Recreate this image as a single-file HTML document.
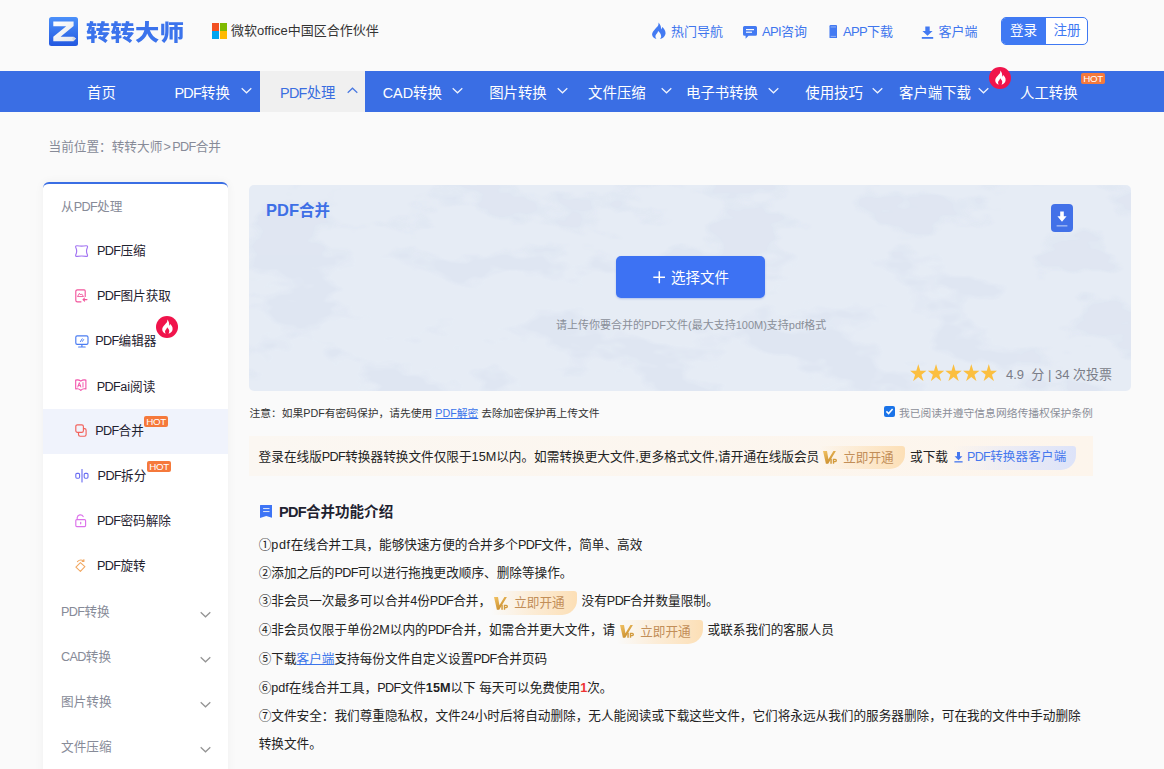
<!DOCTYPE html>
<html lang="zh-CN">
<head>
<meta charset="utf-8">
<title>PDF合并 - 转转大师</title>
<style>
*{box-sizing:border-box;margin:0;padding:0}
html,body{width:1164px;height:769px;overflow:hidden}
body{background:#fafafa;font-family:"Liberation Sans","Noto Sans CJK SC",sans-serif;color:#333;position:relative;font-size:13px}
.abs{position:absolute;white-space:nowrap}
.l{letter-spacing:-.05em}
.l2{letter-spacing:-.02em}
.gt{padding:0 1.3px}
#logo-ico{left:49px;top:17px;width:29px;height:29px}
#logo-txt{left:86px;top:14.8px;font-size:24.3px;letter-spacing:.25px;font-weight:900;color:#3b73ec;line-height:36px;transform:scaleY(.87);transform-origin:0 50%}
#ms{left:212px;top:23px;width:15px;height:16px}
#ms i{position:absolute;width:7.3px;height:7.8px}
#ms-txt{left:231px;top:21px;font-size:13px;line-height:20px;color:#333}
.tl{font-size:13px;line-height:20px;color:#3f76ee;top:21.7px}
#btn{left:1001px;top:17px;width:87px;height:28px;border:1px solid #3f79f3;border-radius:5px;background:#fff;overflow:hidden}
#btn .a{position:absolute;left:-1px;top:-1px;width:45px;height:28px;background:#3f79f3;color:#fff;font-size:13.6px;line-height:28.6px;text-align:center}
#btn .b{position:absolute;left:44px;top:-1px;width:42px;height:28px;color:#3f79f3;font-size:13.6px;line-height:28.6px;text-align:center}
#nav{left:0;top:71px;width:1164px;height:41px;background:#3a6ee4}
#nav .it{position:absolute;top:1.8px;height:41px;line-height:41px;font-size:14.4px;color:#fff;white-space:nowrap}
#nav .act{position:absolute;left:260px;top:0;width:105px;height:41px;background:#f0f0f0}
#nav svg.cv{position:absolute;top:15.7px;margin-left:-.7px;width:11px;height:7px}
.hot{position:absolute;background:#f5793b;color:#fff;font-size:9.8px;line-height:11.6px;height:11.2px;width:24px;text-align:center;border-radius:2px;font-weight:400;letter-spacing:-.35px}
.fire{position:absolute;width:22.4px;height:22.4px;border-radius:50%;background:#f0144b}
#bc{left:48.5px;top:137px;font-size:12.65px;line-height:20px;color:#878b98}
#side{left:43px;top:182.3px;width:185px;height:600px;background:#fff;border-top:2px solid #3a6ee4;border-radius:6px 6px 0 0;box-shadow:0 0 10px rgba(0,0,0,.05)}
#side .h{position:absolute;left:18px;font-size:12.65px;line-height:20px;color:#878b98;white-space:nowrap}
#side .r{position:absolute;font-size:12.65px;line-height:20px;color:#1f2230;white-space:nowrap}
#side .sel{position:absolute;left:0;top:224.7px;width:185px;height:44.8px;background:#f0f3fc}
#side svg.ic{position:absolute;width:14px;height:14px;overflow:visible}
#side svg.cv{position:absolute;left:157px;width:11px;height:7px}
#panel{left:249px;top:185px;width:882px;height:206px;background:#e6ecf5;border-radius:5px;overflow:hidden}
#ptitle{left:266px;top:198px;font-size:15.5px;font-weight:700;color:#3e6fe6;line-height:24px}
#ptitle i{font-style:normal;font-size:16.5px}
#dl{left:1051px;top:203.7px;width:22px;height:28.5px;border-radius:4px;background:#4271e8}
#choose{left:616px;top:256px;width:149px;height:42px;background:#3d72f3;border-radius:5px;box-shadow:0 1px 2px rgba(60,100,220,.3)}
#choose-t{left:671px;top:267.5px;font-size:14.5px;line-height:20px;color:#fff}
#tip{left:556px;top:316px;font-size:11px;line-height:18px;color:#8a8f99}
#stars{left:909.6px;top:362.4px;font-size:17.6px;line-height:24px;color:#fbbf40;transform:scaleY(1.07)}
#score{left:1006px;top:364.8px;font-size:13px;line-height:20px;color:#7a7d88}
#note{left:249.5px;top:404.2px;font-size:10.75px;line-height:18px;color:#333}
#note a{color:#3b74ea;text-decoration:underline}
#agree{left:899px;top:404px;font-size:10.78px;line-height:18px;color:#8b8e98}
#cb{left:883.7px;top:406.2px;width:11px;height:10.6px;background:#1a73e8;border-radius:2px}
#bar{left:249px;top:436px;width:844px;height:40px;background:linear-gradient(90deg,#fbf7f2,#fdf5ec)}
.b13{font-size:12.65px;line-height:20px;color:#222}
.vip{position:absolute;height:23.6px;border-radius:0 3px 15px 0;background:linear-gradient(90deg,rgba(253,226,188,0) 0%,rgba(253,226,188,.55) 45%,#fcdfb6 100%);white-space:nowrap}
.vip>span{position:absolute;left:23.6px;top:2px;font-size:12.65px;line-height:20px;color:#c28e58}
.vip>svg{position:absolute;left:3.6px;top:5.4px;width:14.5px;height:13px}
.cli{position:absolute;height:23.6px;border-radius:0 3px 15px 0;background:linear-gradient(90deg,rgba(222,228,250,0) 0%,rgba(222,228,250,.6) 50%,#dde3f9 100%);white-space:nowrap}
.cli>span{position:absolute;left:14.5px;top:1.3px;font-size:12.5px;line-height:20px;color:#4577ee;letter-spacing:.2px}
.cli>svg{position:absolute;left:1.5px;top:6px;width:9px;height:10.5px}
#sec{left:279px;top:500.5px;font-size:14.55px;font-weight:700;line-height:22px;color:#1f2230}
.ln{position:absolute;left:258.7px;font-size:12.63px;line-height:20px;color:#222;white-space:nowrap}
.ln a{color:#3b74ea;text-decoration:underline}
.ln b{font-weight:700}
.ln .red{color:#e33}
</style>
</head>
<body>
<svg id="logo-ico" class="abs" viewBox="0 0 29 29">
  <defs><linearGradient id="lg" x1="0" y1="0" x2="0" y2="1"><stop offset="0" stop-color="#4b90fa"/><stop offset="1" stop-color="#2358e0"/></linearGradient>
  <linearGradient id="lz" x1="0" y1="0" x2="1" y2="1"><stop offset="0" stop-color="#ffffff"/><stop offset="1" stop-color="#e4e6ea"/></linearGradient></defs>
  <rect x="0" y="0" width="29" height="29" rx="2.5" fill="url(#lg)"/>
  <path d="M4.3 4.6H24.6V9L11.6 19.7H24.4L27 21.4L24.4 24.3H4.3V19.7L17.2 9.2H4.3Z" fill="url(#lz)"/>
  <path d="M24.4 19.7L27 21.4L24.4 24.3L23.2 21.6Z" fill="#d3d6dc"/>
</svg>
<div id="logo-txt" class="abs">转转大师</div>
<div id="ms" class="abs"><i style="left:0;top:0;background:#f25022"></i><i style="left:7.7px;top:0;background:#7fba00"></i><i style="left:0;top:8.2px;background:#00a4ef"></i><i style="left:7.7px;top:8.2px;background:#ffb900"></i></div>
<div id="ms-txt" class="abs">微软office中国区合作伙伴</div>
<svg class="abs" style="left:651.3px;top:22.2px;width:15.2px;height:17.4px" viewBox="0 0 15 17"><path d="M7.2 0.3C8.2 3 6 4.6 4.3 6.6C2.4 8.8 0.6 10.6 1.2 13.1C1.7 15.2 3.6 16.6 5.4 16.8C4.2 15.6 4 13.8 5 12.3C5.8 11.1 6.8 10.3 7 8.8C8.6 10.2 10.3 12.2 10 14.4C9.9 15.4 9.4 16.2 8.8 16.8C11.3 16.5 13.6 14.6 14.2 12C15 8.6 12.6 6.4 11.2 4.9C10.9 5.9 10.6 6.6 9.9 7.2C10.1 4.4 9.2 1.7 7.2 0.3Z" fill="#437af2"/></svg>
<div class="abs tl" style="left:671px">热门导航</div>
<svg class="abs" style="left:742.6px;top:25.5px;width:14px;height:13px" viewBox="0 0 14 13"><path d="M1.5 0H12.5A1.5 1.5 0 0 1 14 1.5V8.3A1.5 1.5 0 0 1 12.5 9.8H5.5L2.6 12.8V9.8H1.5A1.5 1.5 0 0 1 0 8.3V1.5A1.5 1.5 0 0 1 1.5 0Z" fill="#437af2"/><rect x="3" y="3" width="8" height="1.2" fill="#fafafa"/><rect x="3" y="5.6" width="6" height="1.2" fill="#fafafa"/></svg>
<div class="abs tl" style="left:762px"><span class="l">API</span>咨询</div>
<svg class="abs" style="left:828.6px;top:24.8px;width:8.6px;height:13.4px" viewBox="0 0 8 14"><rect x="0" y="0" width="8" height="14" rx="1.2" fill="#437af2"/><rect x="1.2" y="1.6" width="5.6" height="0.9" fill="#fafafa" opacity=".5"/><rect x="1.2" y="11.4" width="5.6" height="0.9" fill="#fafafa" opacity=".5"/></svg>
<div class="abs tl" style="left:843px"><span class="l">APP</span>下载</div>
<svg class="abs" style="left:921px;top:25.5px;width:13px;height:13px" viewBox="0 0 13 13"><path d="M4.3 0.5H8.7V5H11.6L6.5 9.8L1.4 5H4.3Z" fill="#437af2"/><rect x="0.8" y="11" width="11.4" height="1.8" fill="#437af2"/></svg>
<div class="abs tl" style="left:938.5px">客户端</div>
<div id="btn" class="abs"><div class="a">登录</div><div class="b">注册</div></div>
<div id="nav" class="abs">
  <div class="act"></div>
  <div class="it" style="left:87px">首页</div>
  <div class="it" style="left:174.4px"><span class="l">PDF</span>转换</div>
  <svg class="cv" style="left:241.5px" viewBox="0 0 11 7"><path d="M.7 1.2L5.5 5.8L10.3 1.2" fill="none" stroke="#fff" stroke-width="1.2" opacity=".92"/></svg>
  <div class="it" style="left:280px;color:#3a6ee0"><span class="l">PDF</span>处理</div>
  <svg class="cv" style="left:347.5px" viewBox="0 0 11 7"><path d="M.7 5.8L5.5 1.2L10.3 5.8" fill="none" stroke="#3a6ee0" stroke-width="1.2" opacity=".92"/></svg>
  <div class="it" style="left:382.7px">CAD转换</div>
  <svg class="cv" style="left:452.5px" viewBox="0 0 11 7"><path d="M.7 1.2L5.5 5.8L10.3 1.2" fill="none" stroke="#fff" stroke-width="1.2" opacity=".92"/></svg>
  <div class="it" style="left:489.2px">图片转换</div>
  <svg class="cv" style="left:557.2px" viewBox="0 0 11 7"><path d="M.7 1.2L5.5 5.8L10.3 1.2" fill="none" stroke="#fff" stroke-width="1.2" opacity=".92"/></svg>
  <div class="it" style="left:588.1px">文件压缩</div>
  <svg class="cv" style="left:662px" viewBox="0 0 11 7"><path d="M.7 1.2L5.5 5.8L10.3 1.2" fill="none" stroke="#fff" stroke-width="1.2" opacity=".92"/></svg>
  <div class="it" style="left:686px">电子书转换</div>
  <svg class="cv" style="left:768.5px" viewBox="0 0 11 7"><path d="M.7 1.2L5.5 5.8L10.3 1.2" fill="none" stroke="#fff" stroke-width="1.2" opacity=".92"/></svg>
  <div class="it" style="left:805.3px">使用技巧</div>
  <svg class="cv" style="left:873px" viewBox="0 0 11 7"><path d="M.7 1.2L5.5 5.8L10.3 1.2" fill="none" stroke="#fff" stroke-width="1.2" opacity=".92"/></svg>
  <div class="it" style="left:899px">客户端下载</div>
  <svg class="cv" style="left:978.5px" viewBox="0 0 11 7"><path d="M.7 1.2L5.5 5.8L10.3 1.2" fill="none" stroke="#fff" stroke-width="1.2" opacity=".92"/></svg>
  <div class="it" style="left:1020px">人工转换</div>
  <div class="hot" style="left:1081px;top:2.1px">HOT</div>
</div>
<div class="fire" style="left:988.8px;top:66.7px"><svg viewBox="0 0 23 23" width="22.4" height="22.4" style="display:block"><path d="M11.5 3.6C12.3 6 10.4 7.4 9 9C7.4 10.8 6 12.4 6.5 14.6C6.9 16.6 8.5 17.9 10.1 18.1C9.2 17 9 15.6 9.8 14.4C10.5 13.4 11.3 12.7 11.4 11.5C12.6 12.6 13.9 14.2 13.6 16C13.5 16.9 13.2 17.5 12.7 18.1C14.8 17.8 16.6 16.2 17 14.1C17.6 11.3 15.7 9.5 14.6 8.3C14.4 9.1 14.1 9.6 13.6 10.1C13.8 7.8 13.1 4.9 11.5 3.6Z" fill="#fff"/></svg></div>
<div id="bc" class="abs">当前位置：转转大师<span class="gt">&gt;</span><span class="l">PDF</span>合并</div>
<div id="side" class="abs">
  <div class="sel"></div>
  <div class="h" style="top:12.5px">从<span class="l">PDF</span>处理</div>
  <div class="r" style="left:54.0px;top:57.0px"><span class="l">PDF</span>压缩</div>
  <div class="r" style="left:54.0px;top:102.1px"><span class="l">PDF</span>图片获取</div>
  <div class="r" style="left:52.2px;top:146.9px"><span class="l">PDF</span>编辑器</div>
  <div class="r" style="left:53.8px;top:192.3px"><span class="l">PDF</span>ai阅读</div>
  <div class="r" style="left:52.2px;top:236.8px"><span class="l">PDF</span>合并</div>
  <div class="r" style="left:54.6px;top:282.1px"><span class="l">PDF</span>拆分</div>
  <div class="r" style="left:54.0px;top:327.1px"><span class="l">PDF</span>密码解除</div>
  <div class="r" style="left:54.0px;top:372.1px"><span class="l">PDF</span>旋转</div>
  <div class="h" style="top:417.7px"><span class="l">PDF</span>转换</div>
  <svg class="cv" style="left:157px;top:427.2px" viewBox="0 0 11 7"><path d="M.7 1.2L5.5 5.8L10.3 1.2" fill="none" stroke="#8a8a8a" stroke-width="1.2" opacity=".92"/></svg>
  <div class="h" style="top:462.7px"><span class="l">CAD</span>转换</div>
  <svg class="cv" style="left:157px;top:472.2px" viewBox="0 0 11 7"><path d="M.7 1.2L5.5 5.8L10.3 1.2" fill="none" stroke="#8a8a8a" stroke-width="1.2" opacity=".92"/></svg>
  <div class="h" style="top:507.7px">图片转换</div>
  <svg class="cv" style="left:157px;top:517.2px" viewBox="0 0 11 7"><path d="M.7 1.2L5.5 5.8L10.3 1.2" fill="none" stroke="#8a8a8a" stroke-width="1.2" opacity=".92"/></svg>
  <div class="h" style="top:552.7px">文件压缩</div>
  <svg class="cv" style="left:157px;top:562.2px" viewBox="0 0 11 7"><path d="M.7 1.2L5.5 5.8L10.3 1.2" fill="none" stroke="#8a8a8a" stroke-width="1.2" opacity=".92"/></svg>
  <svg class="ic" style="left:31.7px;top:60.7px;width:13.2px;height:12.2px" viewBox="0 0 13.2 12.2" fill="none" stroke-linecap="round" stroke-linejoin="round"><path d="M2.1 .8Q6.6 1.5 11.1 .8Q13 .6 12.4 2.5Q10.6 6.1 12.4 9.7Q13 11.6 11.1 11.4Q6.6 10.7 2.1 11.4Q.2 11.6 .8 9.7Q2.6 6.1 .8 2.5Q.2 .6 2.1 .8Z" stroke="#a274f2" stroke-width="1.15"/></svg>
  <svg class="ic" style="left:32px;top:104.5px;width:13px;height:14px" viewBox="0 0 13 14" fill="none" stroke-linecap="round" stroke-linejoin="round"><path d="M9.2 .8H2.4A1.6 1.6 0 0 0 .8 2.4V11.2A1.6 1.6 0 0 0 2.4 12.8H6M9.2 .8Q10.2 .8 10.2 1.9V7.4" stroke="#f2559c" stroke-width="1.15"/><path d="M2.7 7.2L4.4 4.3L5.6 6L6.6 4.9L8.3 7.2Z" stroke="#f2559c" stroke-width=".9"/><path d="M12 10.6H8M9.6 9L8 10.6L9.6 12.2" stroke="#f2559c" stroke-width="1.05"/></svg>
  <svg class="ic" style="left:31.6px;top:150.5px;width:13.8px;height:13px" viewBox="0 0 13.8 13" fill="none" stroke-linecap="round" stroke-linejoin="round"><rect x=".8" y=".8" width="12.2" height="8.6" rx="1.4" stroke="#4a7cf2" stroke-width="1.15"/><path d="M6.9 9.6V11.8M3.6 12H10.2" stroke="#4a7cf2" stroke-width="1.15"/><path d="M5.4 6.6L7.2 3.8M7.4 6.4L8.6 4.6" stroke="#4a7cf2" stroke-width="1"/></svg>
  <svg class="ic" style="left:32.4px;top:195.0px;width:11.6px;height:12px" viewBox="0 0 11.6 12" fill="none" stroke-linecap="round" stroke-linejoin="round"><path d="M.7 1.1C2.4 .6 4.4 1 5.8 2.2C7.2 1 9.2 .6 10.9 1.1V9.9C9.2 9.5 7.2 9.8 5.8 11.4C4.4 9.8 2.4 9.5 .7 9.9Z" stroke="#f252aa" stroke-width="1.1"/><path d="M2.8 8L4.3 3.6L5.8 8M3.3 6.6H5.3M8 3.6V8" stroke="#f252aa" stroke-width=".95"/></svg>
  <svg class="ic" style="left:31.6px;top:240.0px;width:12px;height:13px" viewBox="0 0 12 13" fill="none" stroke-linecap="round" stroke-linejoin="round"><rect x="3.5" y="4.6" width="7.6" height="7.6" rx="1.6" stroke="#f2625c" stroke-width="1.15"/><rect x=".8" y=".8" width="7.6" height="7.6" rx="1.6" stroke="#f2625c" stroke-width="1.15" fill="#f0f3fc"/></svg>
  <svg class="ic" style="left:31.6px;top:284.7px;width:13.8px;height:13.6px" viewBox="0 0 13.8 13.6" fill="none" stroke-linecap="round" stroke-linejoin="round"><path d="M7 .6V13" stroke="#6b6ef2" stroke-width="1.15"/><rect x=".8" y="4.4" width="3.8" height="4.8" rx="1.1" stroke="#6b6ef2" stroke-width="1.1"/><rect x="9.2" y="4.4" width="3.8" height="4.8" rx="1.1" stroke="#6b6ef2" stroke-width="1.1"/></svg>
  <svg class="ic" style="left:32.4px;top:329.3px;width:11.6px;height:13.4px" viewBox="0 0 11.6 13.4" fill="none" stroke-linecap="round" stroke-linejoin="round"><rect x=".8" y="5.6" width="9.8" height="7" rx="1" stroke="#dc72ea" stroke-width="1.15"/><path d="M2.2 5.4V3.6A3.2 3.2 0 0 1 8.2 2.6" stroke="#dc72ea" stroke-width="1.15"/><path d="M5.7 8.4V9.8" stroke="#dc72ea" stroke-width="1.2"/></svg>
  <svg class="ic" style="left:32.2px;top:374.7px;width:11px;height:13.2px" viewBox="0 0 11 13.2" fill="none" stroke-linecap="round" stroke-linejoin="round"><path d="M5.4 3.6L9.9 7.6L5.4 12.4L.9 8.2Z" stroke="#f2a862" stroke-width="1.1"/><path d="M2.4 2.6C4.2 .8 7 .8 8.8 2.2M8.9 .5L9 2.4L7.1 2.5" stroke="#f2a862" stroke-width="1.05"/></svg>
  <div class="hot" style="left:101.0px;top:231.8px">HOT</div>
  <div class="hot" style="left:104.0px;top:276.7px">HOT</div>
</div>
<div class="fire" style="left:155.8px;top:315.5px"><svg viewBox="0 0 23 23" width="22.4" height="22.4" style="display:block"><path d="M11.5 3.6C12.3 6 10.4 7.4 9 9C7.4 10.8 6 12.4 6.5 14.6C6.9 16.6 8.5 17.9 10.1 18.1C9.2 17 9 15.6 9.8 14.4C10.5 13.4 11.3 12.7 11.4 11.5C12.6 12.6 13.9 14.2 13.6 16C13.5 16.9 13.2 17.5 12.7 18.1C14.8 17.8 16.6 16.2 17 14.1C17.6 11.3 15.7 9.5 14.6 8.3C14.4 9.1 14.1 9.6 13.6 10.1C13.8 7.8 13.1 4.9 11.5 3.6Z" fill="#fff"/></svg></div>
<div id="panel" class="abs"><svg width="882" height="206" style="display:block"><defs><filter id="tx" x="0" y="0" width="100%" height="100%" color-interpolation-filters="sRGB"><feTurbulence type="fractalNoise" baseFrequency="0.011 0.022" numOctaves="4" seed="11"/><feColorMatrix type="matrix" values="0 0 0 0 .865  0 0 0 0 .895  0 0 0 0 .945  0 0 0 -9 4.3"/></filter></defs><rect width="882" height="206" filter="url(#tx)" opacity=".7"/></svg></div>
<div id="ptitle" class="abs"><i>PDF</i>合并</div>
<div id="dl" class="abs"><svg viewBox="0 0 22 28.5" width="22" height="28.5" style="display:block"><path d="M9.2 7.6H12.8V12.2H15.6L11 17.8L6.4 12.2H9.2Z" fill="#fff"/><rect x="5.6" y="21.2" width="10.8" height="1.3" fill="#fff" opacity=".55"/></svg></div>
<div id="choose" class="abs"></div>
<svg class="abs" style="left:652.6px;top:271.3px;width:12.6px;height:12.6px" viewBox="0 0 12.6 12.6"><path d="M6.3 .3V12.3M.3 6.3H12.3" stroke="#fff" stroke-width="1.5"/></svg>
<div id="choose-t" class="abs">选择文件</div>
<div id="tip" class="abs">请上传你要合并的PDF文件(最大支持100M)支持pdf格式</div>
<div id="stars" class="abs">★★★★★</div>
<div id="score" class="abs">4.9&nbsp; 分 | 34 次投票</div>
<div id="note" class="abs">注意：如果PDF有密码保护，请先使用 <a>PDF解密</a> 去除加密保护再上传文件</div>
<div id="cb" class="abs"><svg viewBox="0 0 11 10.6" width="11" height="10.6" style="display:block"><path d="M2.4 5.4L4.6 7.6L8.6 3" fill="none" stroke="#fff" stroke-width="1.5"/></svg></div>
<div id="agree" class="abs">我已阅读并遵守信息网络传播权保护条例</div>
<div id="bar" class="abs"></div>
<div class="abs b13" style="left:258.6px;top:447px">登录在线版<span class="l">PDF</span>转换器转换文件仅限于15M以内。如需转换更大文件,更多格式文件,请开通在线版会员</div>
<div class="vip" style="left:819.6px;top:445.8px;width:85.6px"><svg viewBox="0 0 14.5 13"><defs><linearGradient id="vg" x1="0" y1="0" x2=".6" y2="1"><stop offset="0" stop-color="#f2c262"/><stop offset="1" stop-color="#c88c2c"/></linearGradient></defs><path d="M0 0H4L5.4 8.2L10.4 0H12.9L5.2 12.7H2.9Z" fill="url(#vg)"/><path d="M7.3 7.8H8.8V12.7H7.3ZM9.8 7.8H12.3A1.7 1.7 0 0 1 12.3 11.2H11.2V12.7H9.8ZM11.2 8.9V10.1H12A.6 .6 0 0 0 12 8.9Z" fill="#d29a3c" fill-rule="evenodd"/></svg><span>立即开通</span></div>
<div class="abs b13" style="left:910px;top:447px">或下载</div>
<div class="cli" style="left:952.5px;top:446px;width:123px"><svg viewBox="0 0 9 10.5"><path d="M3 0H6V4.2H8.4L4.5 8.2L.6 4.2H3Z" fill="#4577ee"/><rect x=".4" y="9.2" width="8.2" height="1.3" fill="#4577ee"/></svg><span><span class="l">PDF</span>转换器客户端</span></div>
<svg class="abs" style="left:259.6px;top:504.8px;width:12.5px;height:13px" viewBox="0 0 12.5 13"><path d="M.5 0H12Q12.5 0 12.5 .5V12.9L6.25 11L0 12.9V.5Q0 0 .5 0Z" fill="#3d74f5"/><rect x="3.1" y="3.1" width="6.4" height=".95" fill="#fafafa" opacity=".9"/><rect x="3.1" y="6.1" width="6.4" height=".95" fill="#fafafa" opacity=".9"/></svg>
<div id="sec" class="abs"><span class="l">PDF</span>合并功能介绍</div>
<div class="ln" style="top:534.6px">①<span style="letter-spacing:.6px">pdf</span>在线合并工具，能够快速方便的合并多个<span class="l">PDF</span>文件，简单、高效</div>
<div class="ln" style="top:563.2px">②添加之后的<span class="l">PDF</span>可以进行拖拽更改顺序、删除等操作。</div>
<div class="ln" style="top:591.2px">③非会员一次最多可以合并4份<span class="l">PDF</span>合并，</div>
<div class="ln" style="top:620.2px">④非会员仅限于单份2M以内的<span class="l">PDF</span>合并，如需合并更大文件，请</div>
<div class="ln" style="top:649.3px">⑤下载<a>客户端</a>支持每份文件自定义设置<span class="l">PDF</span>合并页码</div>
<div class="ln" style="top:678.3px">⑥pdf在线合并工具，<span class="l">PDF</span>文件<b>15M</b>以下 每天可以免费使用<b class="red">1</b>次。</div>
<div class="ln" style="top:706.0px">⑦文件安全：我们尊重隐私权，文件24小时后将自动删除，无人能阅读或下载这些文件，它们将永远从我们的服务器删除，可在我的文件中手动删除</div>
<div class="ln" style="top:734.3px">转换文件。</div>
<div class="vip" style="left:490.6px;top:591.4px;width:86px"><svg viewBox="0 0 14.5 13"><defs><linearGradient id="vg" x1="0" y1="0" x2=".6" y2="1"><stop offset="0" stop-color="#f2c262"/><stop offset="1" stop-color="#c88c2c"/></linearGradient></defs><path d="M0 0H4L5.4 8.2L10.4 0H12.9L5.2 12.7H2.9Z" fill="url(#vg)"/><path d="M7.3 7.8H8.8V12.7H7.3ZM9.8 7.8H12.3A1.7 1.7 0 0 1 12.3 11.2H11.2V12.7H9.8ZM11.2 8.9V10.1H12A.6 .6 0 0 0 12 8.9Z" fill="#d29a3c" fill-rule="evenodd"/></svg><span>立即开通</span></div>
<div class="ln" style="left:581.6px;top:591.2px">没有<span class="l">PDF</span>合并数量限制。</div>
<div class="vip" style="left:616.6px;top:620px;width:86px"><svg viewBox="0 0 14.5 13"><defs><linearGradient id="vg" x1="0" y1="0" x2=".6" y2="1"><stop offset="0" stop-color="#f2c262"/><stop offset="1" stop-color="#c88c2c"/></linearGradient></defs><path d="M0 0H4L5.4 8.2L10.4 0H12.9L5.2 12.7H2.9Z" fill="url(#vg)"/><path d="M7.3 7.8H8.8V12.7H7.3ZM9.8 7.8H12.3A1.7 1.7 0 0 1 12.3 11.2H11.2V12.7H9.8ZM11.2 8.9V10.1H12A.6 .6 0 0 0 12 8.9Z" fill="#d29a3c" fill-rule="evenodd"/></svg><span>立即开通</span></div>
<div class="ln" style="left:707.6px;top:620.2px">或联系我们的客服人员</div>
</body>
</html>
